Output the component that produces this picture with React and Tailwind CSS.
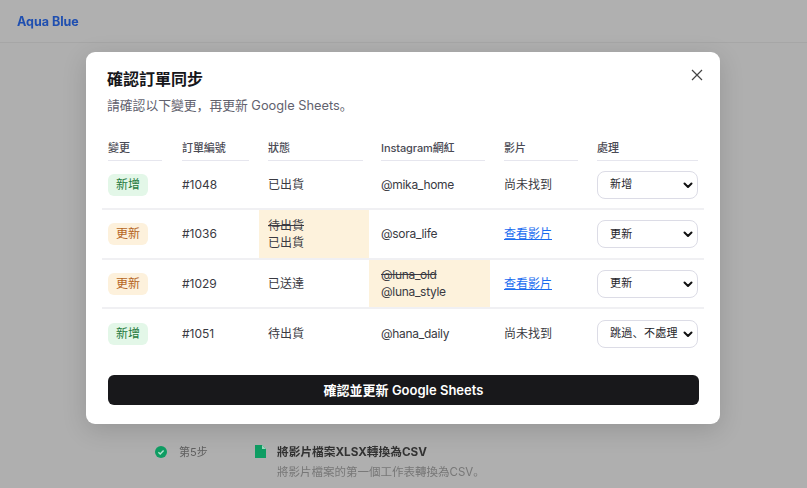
import React from "react";

const grid = "grid grid-cols-[70px_87px_110px_121px_97px_117px]";

function Badge({ kind }) {
  const c = kind === "新增" ? "bg-[#e3f7e8] text-[#1f7a3d]" : "bg-[#fdf1dc] text-[#b5651d]";
  return <span className={`ml-[6px] flex h-[22px] w-[40px] items-center justify-center rounded-[6px] text-[12px] ${c}`}>{kind}</span>;
}

function Sel({ value }) {
  return (
    <div className="ml-[10px] flex h-[28px] w-[101px] items-center justify-between rounded-[8px] border border-[#dcdce6] bg-white pl-[12px] pr-[2px] text-[11px] tracking-[0.3px] text-[#26262b]">
      <span className="whitespace-nowrap">{value}</span>
      <svg width="12" height="12" viewBox="0 0 12 12" fill="none" stroke="#111" strokeWidth="2" strokeLinecap="round" strokeLinejoin="round" className="mr-[1px] shrink-0"><path d="M2.5 4.5 6 8l3.5-3.5" /></svg>
    </div>
  );
}

const Link = () => <a className="text-[#1a6cf0] underline">查看影片</a>;
const None = () => <span>尚未找到</span>;

function Change({ from, to, pl }) {
  return (
    <div className={`flex h-full flex-col justify-center gap-[1px] bg-[#fdf2dc] ${pl} leading-[16px]`}>
      <span className="line-through">{from}</span>
      <span>{to}</span>
    </div>
  );
}

const rows = [
  { k: "新增", id: "#1048", st: "已出貨", ig: "@mika_home", v: <None />, s: "新增", h: "h-[49px]" },
  { k: "更新", id: "#1036", st: <Change from="待出貨" to="已出貨" pl="pl-[9px]" />, ig: "@sora_life", v: <Link />, s: "更新", h: "h-[50px]" },
  { k: "更新", id: "#1029", st: "已送達", ig: <Change from="@luna_old" to="@luna_style" pl="pl-[12px]" />, v: <Link />, s: "更新", h: "h-[49px]" },
  { k: "新增", id: "#1051", st: "待出貨", ig: "@hana_daily", v: <None />, s: "跳過、不處理", h: "h-[49px]" },
];

const heads = [
  ["變更", "ml-[6px] mr-[10px]"],
  ["訂單編號", "ml-[10px] mr-[10px]"],
  ["狀態", "ml-[9px] mr-[6px]"],
  ["Instagram網紅", "ml-[12px] mr-[5px]"],
  ["影片", "ml-[14px] mr-[9px]"],
  ["處理", "ml-[10px] mr-[6px]"],
];

export default function App() {
  return (
    <div className="relative h-[488px] w-[807px] overflow-hidden bg-[#afafaf] font-['Inter','Noto_Sans_CJK_SC',sans-serif]">
      <header className="flex h-[43px] items-center border-b border-[#a6a6a6] bg-[#b0b0b0] pl-[17px] pt-[2px] text-[12.5px] font-bold text-[#1f4fb0] blur-[0.5px]">Aqua Blue</header>
      <section className="ml-[155px] mt-[401px] flex blur-[0.6px]">
        <svg width="12" height="12" viewBox="0 0 12 12" className="mt-[2px]"><circle cx="6" cy="6" r="6" fill="#0f9d63" /><path d="M3.4 6.2 5.2 8l3.4-3.6" fill="none" stroke="#b5e5d0" strokeWidth="1.4" /></svg>
        <span className="ml-[12px] w-[76px] text-[11px] leading-[16px] text-[#5f5f5f]">第5步</span>
        <svg width="11" height="13" viewBox="0 0 11 13" className="mt-[1px]"><path d="M0 0h7l4 4v9H0z" fill="#0f9d63" /><path d="M7 0v4h4z" fill="#9fd8bf" /></svg>
        <div className="ml-[11px] flex flex-col">
          <span className="text-[11.7px] font-bold leading-[16px] text-[#333]">將影片檔案XLSX轉換為CSV</span>
          <span className="mt-[4px] text-[11.5px] leading-[16px] text-[#777]">將影片檔案的第一個工作表轉換為CSV。</span>
        </div>
      </section>

      <div className="absolute left-[86px] top-[52px] flex h-[372px] w-[634px] flex-col rounded-[9px] bg-white px-[16px] shadow-[0_6px_24px_rgba(0,0,0,0.15)]">
        <button className="absolute right-[17px] top-[17px] text-[#444]">
          <svg width="12" height="12" viewBox="0 0 12 12" fill="none" stroke="currentColor" strokeWidth="1.2"><path d="M1 1l10 10M11 1 1 11" /></svg>
        </button>
        <h2 className="ml-[5px] mt-[16px] text-[16px] font-semibold leading-[22px] text-[#16161a]">確認訂單同步</h2>
        <p className="ml-[5px] mt-[6px] text-[12.8px] leading-[20px] text-[#62626e]">請確認以下變更，再更新 Google Sheets。</p>

        <div className={`${grid} mt-[16px]`}>
          {heads.map(([t, m]) => (
            <div key={t} className={`${m} h-[29px] whitespace-nowrap border-b border-[#e6e6ee] pt-[8px] text-[11px] font-medium leading-[16px] tracking-[-0.1px] text-[#4a4a54]`}>{t}</div>
          ))}
        </div>

        {rows.map((r, i) => (
          <div key={r.id} className={`${grid} ${r.h} items-center text-[12px] text-[#3a3a42] ${i < 3 ? "border-b-2 border-[#f0f0f3]" : ""}`}>
            <Badge kind={r.k} />
            <div className="pl-[10px]">{r.id}</div>
            <div className={`h-full ${typeof r.st === "string" ? "flex items-center pl-[9px]" : ""}`}>{r.st}</div>
            <div className={`h-full tracking-[-0.3px] ${typeof r.ig === "string" ? "flex items-center pl-[12px]" : ""}`}>{r.ig}</div>
            <div className="pl-[14px]">{r.v}</div>
            <Sel value={r.s} />
          </div>
        ))}

        <button className="ml-[6px] mt-[17px] flex h-[30px] w-[591px] items-center justify-center rounded-[6px] bg-[#18181b] pt-[2px] text-[13px] font-semibold text-white">確認並更新 Google Sheets</button>
      </div>
    </div>
  );
}
